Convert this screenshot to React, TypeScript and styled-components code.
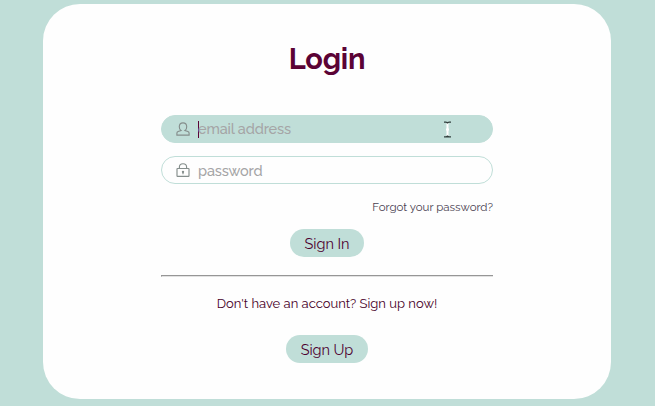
import React from "react";
import styled, { createGlobalStyle } from "styled-components";

const mint = "#c0ded8";
const plum = "#5b0335";

const GlobalStyle = createGlobalStyle`
  *, *::before, *::after { box-sizing: border-box; }
  body {
    margin: 0;
    background: ${mint};
    color: ${plum};
    font-family: Raleway, Lato, "Open Sans", sans-serif;
  }
`;

const Page = styled.main`
  height: 406px;
  padding: 4px 44px 7px 43px;
  overflow: hidden;
`;

const Card = styled.section`
  height: 395px;
  border-radius: 37px;
  background: #fefefe;
  display: flex;
  flex-direction: column;
  align-items: center;
`;

const Title = styled.h1`
  margin: 37px 0 0;
  height: 74px;
  font-size: 29px;
  line-height: 36px;
  font-weight: 700;
  letter-spacing: -0.2px;
`;

const Form = styled.form`
  width: 332px;
  display: flex;
  flex-direction: column;
  align-items: center;
`;

const Field = styled.label<{ $active?: boolean }>`
  position: relative;
  width: 100%;
  height: 28px;
  margin-bottom: 13px;
  padding-left: 14px;
  display: flex;
  align-items: center;
  border: 1px solid ${mint};
  border-radius: 14px;
  background: ${(p) => (p.$active ? mint : "transparent")};
`;

const FieldIcon = styled.svg`
  width: 14px;
  height: 14px;
  fill: none;
  stroke: #858e8c;
  stroke-width: 1.15;
  flex: none;
`;

const Caret = styled.span`
  width: 1px;
  height: 17px;
  margin-right: -1px;
  background: ${plum};
`;

const Placeholder = styled.span<{ $drop?: number }>`
  padding-top: ${(p) => p.$drop ?? 0}px;
  color: #a5a5a6;
  font-size: 14.5px;
  font-weight: 500;
  line-height: 20px;
  letter-spacing: -0.15px;
  white-space: nowrap;
`;

const FieldText = styled.span`
  display: flex;
  align-items: center;
  margin-left: 8px;
`;

const Pointer = styled.svg`
  position: absolute;
  left: 281px;
  top: 5px;
  width: 9px;
  height: 17px;
  fill: none;
`;

const Forgot = styled.a`
  align-self: flex-end;
  height: 30px;
  margin-top: 2px;
  font-size: 11.5px;
  line-height: 16px;
  color: #494150;
  white-space: nowrap;
`;

const Button = styled.button<{ $width: number }>`
  width: ${(p) => p.$width}px;
  height: 28px;
  padding: 1px 0 0;
  border: 0;
  border-radius: 14px;
  background: ${mint};
  color: #4e0030;
  font: inherit;
  font-size: 14.5px;
  line-height: 20px;
  letter-spacing: -0.05px;
  white-space: nowrap;
`;

const Divider = styled.hr`
  width: 100%;
  height: 2px;
  margin: 18px 0;
  border: 0;
  border-top: 1px solid #969696;
  border-bottom: 1px solid #e2e2e2;
  border-left: 1px solid #969696;
`;

const Prompt = styled.p`
  margin: 0;
  height: 40px;
  color: #480028;
  font-size: 13px;
  line-height: 18px;
  white-space: nowrap;
`;

export default function App() {
  return (
    <Page>
      <GlobalStyle />
      <Card>
        <Title>Login</Title>
        <Form>
          <Field $active>
            <FieldIcon viewBox="0 0 14 14">
              <path d="M5 8.5C3.6 7.6 3.2 6.1 3.3 4.5 3.4 2.1 4.8.8 7 .8s3.6 1.3 3.7 3.7c.1 1.6-.3 3.1-1.7 4l2.9 1c.8.3 1.2.9 1.2 1.7v1.9H.9v-1.9c0-.8.4-1.4 1.2-1.7z" />
            </FieldIcon>
            <FieldText>
              <Caret />
              <Placeholder>email address</Placeholder>
            </FieldText>
            <Pointer viewBox="0 0 9 17">
              <path d="M4.5 2v13M3 8.5h3" stroke="#fff" strokeWidth="2" />
              <path
                d="M1 1.2h1.8q1.7 0 1.7 1.3 0-1.3 1.7-1.3H8M1 15.8h1.8q1.7 0 1.7-1.3 0 1.3 1.7 1.3H8"
                stroke="#303e3c"
                strokeWidth="1.2"
              />
            </Pointer>
          </Field>
          <Field>
            <FieldIcon viewBox="0 0 14 14">
              <rect x="1" y="5.5" width="12" height="7.8" rx="0.6" />
              <path d="M3.4 5.5V4a3.6 3.3 0 0 1 7.2 0v1.5M7 9v2.3" />
              <circle cx="7" cy="8.8" r="0.6" />
            </FieldIcon>
            <FieldText>
              <Placeholder $drop={2}>password</Placeholder>
            </FieldText>
          </Field>
          <Forgot>Forgot your password?</Forgot>
          <Button type="button" $width={74}>Sign In</Button>
          <Divider />
          <Prompt>Don't have an account? Sign up now!</Prompt>
          <Button type="button" $width={82}>Sign Up</Button>
        </Form>
      </Card>
    </Page>
  );
}
